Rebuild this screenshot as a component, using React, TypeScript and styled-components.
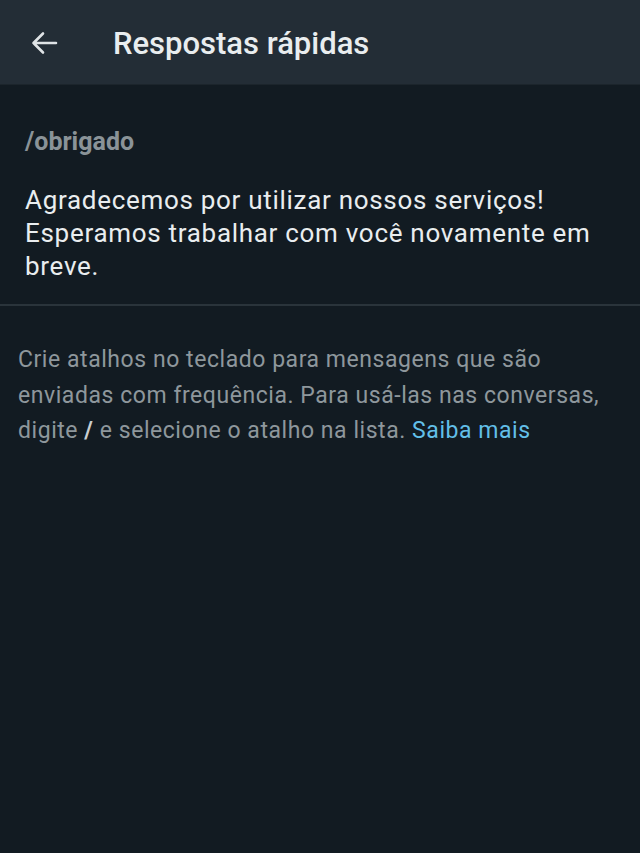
import React from "react";
import styled, { createGlobalStyle } from "styled-components";

const GlobalStyle = createGlobalStyle`
  html, body {
    margin: 0;
    padding: 0;
    background: #121b22;
  }
  body {
    font-family: Roboto, "Noto Sans", "Liberation Sans", sans-serif;
  }
`;

const Screen = styled.div`
  min-height: 853px;
  background: #121b22;
  display: flex;
  flex-direction: column;
`;

const TopBar = styled.header`
  height: 85px;
  background: #232d36;
  display: flex;
  align-items: center;
  padding-left: 30px;
  box-sizing: border-box;
  border-bottom: 1px solid #1c252c;
`;

const BackButton = styled.button`
  width: 28px;
  height: 28px;
  padding: 0;
  border: none;
  background: none;
  color: #dfe3e6;
  display: flex;
  align-items: center;
  justify-content: center;
  margin-top: 1px;
`;

const Title = styled.h1`
  margin: 3px 0 0 55px;
  font-size: 31px;
  line-height: 40px;
  font-weight: 500;
  color: #e9edef;
`;

const ReplyItem = styled.section`
  padding: 42px 25px 21px;
  border-bottom: 2px solid #2a343b;
`;

const Shortcut = styled.div`
  font-size: 25px;
  font-weight: 700;
  color: #8a9398;
  line-height: 30px;
`;

const Message = styled.p`
  margin: 27px 0 0;
  font-size: 26px;
  letter-spacing: 0.7px;
  line-height: 33px;
  color: #e9edef;
`;

const HelpText = styled.p`
  margin: 0;
  padding: 36px 20px 0 18px;
  font-size: 23px;
  letter-spacing: 0.55px;
  line-height: 35.5px;
  color: #8e979c;
`;

const Slash = styled.span`
  color: #c9ced1;
  font-weight: 700;
`;

const Link = styled.a`
  color: #62bfe8;
  text-decoration: none;
`;

const ArrowBack: React.FC = () => (
  <svg width="28" height="28" viewBox="0 0 28 28" fill="none">
    <path
      d="M26 14H3.5M13 4.5L3.5 14l9.5 9.5"
      stroke="currentColor"
      strokeWidth="2.6"
      strokeLinecap="round"
      strokeLinejoin="round"
    />
  </svg>
);

const App: React.FC = () => {
  return (
    <Screen>
      <GlobalStyle />
      <TopBar>
        <BackButton aria-label="Voltar">
          <ArrowBack />
        </BackButton>
        <Title>Respostas rápidas</Title>
      </TopBar>
      <ReplyItem>
        <Shortcut>/obrigado</Shortcut>
        <Message>
          Agradecemos por utilizar nossos serviços! Esperamos trabalhar com
          você novamente em breve.
        </Message>
      </ReplyItem>
      <HelpText>
        Crie atalhos no teclado para mensagens que são enviadas com
        frequência. Para usá-las nas conversas, digite <Slash>/</Slash> e
        selecione o atalho na lista. <Link href="#">Saiba mais</Link>
      </HelpText>
    </Screen>
  );
};

export default App;
